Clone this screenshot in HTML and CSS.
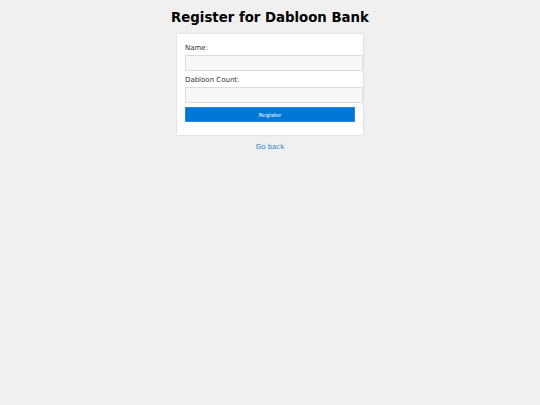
FILE: index.html
```html
<!DOCTYPE html>
<html>
<head>
<meta charset="utf-8">
<link rel="stylesheet" href="styles.css">
</head>
<body>
<h1 class="title">Register for Dabloon Bank</h1>
<form class="card">
  <label class="label" for="name">Name:</label>
  <input class="field" id="name" type="text">
  <label class="label" for="count">Dabloon Count:</label>
  <input class="field" id="count" type="text">
  <button class="btn" type="button">Register</button>
</form>
<a class="back" href="#">Go back</a>
</body>
</html>
```
FILE: styles.css
```css
html, body {
  margin: 0;
  padding: 0;
  background: #f0f0f0;
  font-family: "DejaVu Sans", Verdana, sans-serif;
}
body {
  display: flex;
  flex-direction: column;
  align-items: center;
  padding-top: 9px;
}
.title {
  margin: 0;
  font-size: 13.3px;
  line-height: 17px;
  font-weight: bold;
  color: #000;
}
.card {
  margin-top: 8px;
  width: 170px;
  padding: 9px 8px 13px 8px;
  background: #fff;
  box-shadow: 0 0 2px rgba(0,0,0,0.15);
  display: flex;
  flex-direction: column;
}
.label {
  font-size: 7px;
  line-height: 9px;
  color: #333;
  margin: 1px 0 2px 0;
}
.field {
  box-sizing: content-box;
  width: 170px;
  height: 10px;
  padding: 2px 3px;
  margin: 0 0 4px 0;
  border: 1px solid #dcdcdc;
  background: #f8f8f8;
  font-size: 7px;
  font-family: inherit;
  outline: none;
}
.btn {
  height: 15px;
  width: 170px;
  border: 1px solid #2b88d8;
  background: #0078d7;
  color: #fff;
  font-size: 5.5px;
  font-family: inherit;
  padding: 0;
}
.back {
  margin-top: 8px;
  font-size: 7px;
  color: #1a7fd0;
  text-decoration: none;
}
```
